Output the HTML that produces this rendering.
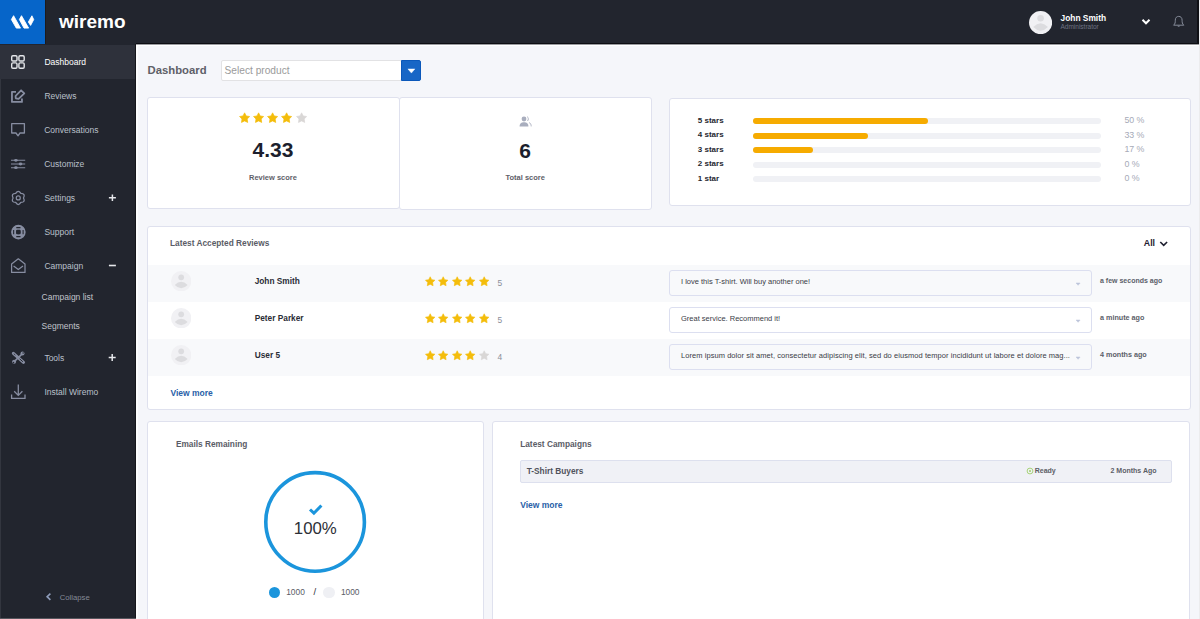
<!DOCTYPE html><html><head><meta charset="utf-8"><style>
*{margin:0;padding:0;box-sizing:border-box}
html,body{width:1200px;height:619px;overflow:hidden;background:#f5f6fa;font-family:"Liberation Sans",sans-serif}
.t{position:absolute;line-height:1;white-space:nowrap}
.a{position:absolute;display:block}
.box{position:absolute}
.card{position:absolute;background:#fff;border:1px solid #dfe1ee;border-radius:3px}
</style></head><body>
<div class="box" style="left:1199px;top:0;width:1px;height:619px;background:#ececee"></div>
<div class="box" style="left:0;top:0;width:1199px;height:44px;background:#22252e"></div>
<div class="box" style="left:136px;top:43px;width:1063px;height:1px;background:#0d0e13"></div>
<div class="box" style="left:1197px;top:0;width:2px;height:44px;background:#0f1015"></div>
<div class="box" style="left:136px;top:44px;width:1063px;height:1px;background:#9a9ba0"></div>
<div class="box" style="left:0;top:0;width:46px;height:46px;background:#0665c9;border-right:1px solid #1c1a1c;border-bottom:1px solid #1c1a1c"></div>
<svg class="a" style="left:0;top:0" width="45" height="45" viewBox="0 0 45 45"><path d="M13.6,15.7 L20.5,28.1 L16.3,28.1 L11.4,19.5 Z M21.5,15.7 L28.6,28.1 L24.0,28.1 L19.4,19.5 Z M31.9,15.8 L33.7,19.6 L30.6,25.4 L28.4,22.0 Z" fill="#fff" stroke="#fff" stroke-width="0.9" stroke-linejoin="round"/></svg>
<div class="t" style="left:59.00px;top:11.92px;font-size:19px;color:#ffffff;font-weight:bold;">wiremo</div>
<svg class="a" style="left:1029.10px;top:11.00px" width="23.2" height="23.2" viewBox="0 0 24 24"><circle cx="12" cy="12" r="12" fill="#f1f1f4"/><circle cx="12" cy="7.5" r="3.4" fill="#dcdcdf"/><path d="M4.4,16.5 Q12,8.8 19.6,16.5 Q12,24.2 4.4,16.5 Z" fill="#dcdcdf"/></svg>
<div class="t" style="left:1060.50px;top:13.79px;font-size:8.4px;color:#ffffff;font-weight:bold;">John Smith</div>
<div class="t" style="left:1060.50px;top:23.70px;font-size:6.5px;color:#6e7384;">Administrator</div>
<svg class="a" style="left:1140px;top:17px" width="12" height="10" viewBox="0 0 12 10"><path d="M2.5,2.8 L6,6.3 L9.5,2.8" fill="none" stroke="#fff" stroke-width="2"/></svg>
<svg class="a" style="left:1169px;top:12px" width="20" height="20" viewBox="1169 12 20 20"><path d="M1173.6,25.2 C1175.2,23.8 1175.3,22.4 1175.3,20.2 C1175.3,17.6 1176.8,16.4 1178.7,16.4 C1180.6,16.4 1182.1,17.6 1182.1,20.2 C1182.1,22.4 1182.2,23.8 1183.8,25.2 Z" fill="none" stroke="#8a909e" stroke-width="0.95" stroke-linejoin="round"/><path d="M1177.2,25.7 Q1178.7,27.8 1180.2,25.7 Z" fill="#8a909e"/></svg>
<div class="box" style="left:0;top:44px;width:136px;height:575px;background:#22252e"></div>
<div class="box" style="left:135px;top:44px;width:1px;height:575px;background:#15161b"></div>
<div class="box" style="left:0;top:618px;width:136px;height:1px;background:#56575e"></div>
<div class="box" style="left:0;top:46px;width:1px;height:572px;background:#33363f"></div>
<div class="box" style="left:0;top:44.5px;width:135px;height:34px;background:#2e313b"></div>
<svg class="a" style="left:10px;top:54px" width="16" height="16" viewBox="0 0 16 16"><g fill="none" stroke="#e4e6ea" stroke-width="1.4"><rect x="1.7" y="1.7" width="5.3" height="5.3" rx="1.2"/><rect x="8.9" y="1.7" width="5.3" height="5.3" rx="1.2"/><rect x="1.7" y="8.9" width="5.3" height="5.3" rx="1.2"/><rect x="8.9" y="8.9" width="5.3" height="5.3" rx="1.2"/></g></svg>
<svg class="a" style="left:8px;top:86px" width="20" height="20" viewBox="8 86 20 20"><g fill="none" stroke="#878da1" stroke-width="1.8" stroke-linejoin="round"><path d="M16,91.9 H11.95 V101.95 H21.95 V98.4"/><path d="M15.75,98.3 L15.6,96 L21.1,90.3 L24.3,93.3 L18.6,98.9 Z"/></g><path d="M21.3,92.6 L22.6,93.9" stroke="#22252e" stroke-width="0.6"/></svg>
<svg class="a" style="left:10px;top:122px" width="16" height="16" viewBox="0 0 16 16"><path d="M1.7,1.6 L14.4,1.6 L14.4,11 L10,11 L8,13.8 L6,11 L1.7,11 Z" fill="none" stroke="#878da1" stroke-width="1.3" stroke-linejoin="round"/></svg>
<svg class="a" style="left:10px;top:156px" width="16" height="16" viewBox="0 0 16 16"><g stroke="#878da1" stroke-width="1.1" fill="none"><path d="M1,4.3 H15.2 M1,8 H15.2 M1,11.7 H15.2"/></g><g fill="#878da1"><ellipse cx="5.9" cy="4.3" rx="1.8" ry="1.4"/><ellipse cx="10.5" cy="8" rx="1.8" ry="1.4"/><ellipse cx="5.9" cy="11.7" rx="1.8" ry="1.4"/></g></svg>
<svg class="a" style="left:8px;top:188px" width="20" height="20" viewBox="8 188 20 20"><g fill="none" stroke="#878da1" stroke-width="1.3" stroke-linejoin="round"><path d="M15.67,193.45 Q18.27,189.25 20.87,193.45 Q25.80,193.60 23.47,197.95 Q25.80,202.30 20.87,202.45 Q18.27,206.65 15.67,202.45 Q10.74,202.30 13.07,197.95 Q10.74,193.60 15.67,193.45 Z"/><circle cx="18.27" cy="197.95" r="2.0" stroke-width="1.2"/></g></svg>
<svg class="a" style="left:8px;top:222px" width="20" height="20" viewBox="8 222 20 20"><circle cx="18.38" cy="232.1" r="4.75" fill="none" stroke="#878da1" stroke-width="5.1"/><g stroke="#22252e" stroke-width="1.05"><path d="M16.3,227.6 H20.5 M16.3,236.6 H20.5 M13.65,230 V234.2 M23.1,230 V234.2"/></g><rect x="16.1" y="229.8" width="4.5" height="4.5" rx="1" fill="#22252e"/></svg>
<svg class="a" style="left:10px;top:256px" width="16" height="18" viewBox="0 0 16 18"><g fill="none" stroke="#878da1" stroke-width="1.25" stroke-linejoin="round"><path d="M1.6,8 L8.3,2.8 L15,8 L15,16.4 L1.6,16.4 Z"/><path d="M3.6,10 L8.3,13.6 L13,10"/></g></svg>
<svg class="a" style="left:8px;top:347px" width="20" height="20" viewBox="8 347 20 20"><g stroke-linecap="round" fill="none"><path d="M13.4,353.3 L23.5,362.3" stroke="#878da1" stroke-width="3.1"/><path d="M19.9,359.1 L22.6,361.5" stroke="#22252e" stroke-width="1.0"/><path d="M14.1,354 L15.1,354.9" stroke="#22252e" stroke-width="0.8"/><path d="M22.4,353.6 L14.2,361.6" stroke="#878da1" stroke-width="1.5"/></g><g fill="#878da1"><circle cx="22.5" cy="353.5" r="2.0"/><circle cx="14.1" cy="361.8" r="2.0"/></g><g fill="#22252e"><circle cx="23.1" cy="352.9" r="0.75"/><circle cx="13.5" cy="362.4" r="0.75"/></g></svg>
<svg class="a" style="left:10px;top:383px" width="16" height="17" viewBox="0 0 16 17"><g fill="none" stroke="#878da1" stroke-width="1.3"><path d="M8.3,1.6 V12.2 M4.2,8.3 L8.3,12.4 L12.4,8.3"/><path d="M1.6,11.4 V15.3 H15 V11.4"/></g></svg>
<div class="t" style="left:44.40px;top:57.70px;font-size:8.5px;color:#ffffff;">Dashboard</div>
<div class="t" style="left:44.40px;top:91.70px;font-size:8.5px;color:#bac0cb;">Reviews</div>
<div class="t" style="left:44.20px;top:125.70px;font-size:8.5px;color:#bac0cb;">Conversations</div>
<div class="t" style="left:44.20px;top:159.60px;font-size:8.5px;color:#bac0cb;">Customize</div>
<div class="t" style="left:44.40px;top:193.70px;font-size:8.5px;color:#bac0cb;">Settings</div>
<div class="t" style="left:44.40px;top:227.70px;font-size:8.5px;color:#bac0cb;">Support</div>
<div class="t" style="left:44.40px;top:262.10px;font-size:8.5px;color:#bac0cb;">Campaign</div>
<div class="t" style="left:41.60px;top:292.70px;font-size:8.5px;color:#c0c3cb;">Campaign list</div>
<div class="t" style="left:41.60px;top:321.60px;font-size:8.5px;color:#c0c3cb;">Segments</div>
<div class="t" style="left:44.40px;top:354.00px;font-size:8.5px;color:#bac0cb;">Tools</div>
<div class="t" style="left:44.40px;top:388.20px;font-size:8.5px;color:#bac0cb;">Install Wiremo</div>
<svg class="a" style="left:100px;top:188px" width="24" height="20" viewBox="100 188 24 20"><path d="M112.4,194.4 V201 M108.9,197.7 H115.9" stroke="#e6e7eb" stroke-width="1.5"/></svg>
<svg class="a" style="left:100px;top:256px" width="24" height="20" viewBox="100 256 24 20"><path d="M108.9,265.5 H115.9" stroke="#e6e7eb" stroke-width="1.6"/></svg>
<svg class="a" style="left:100px;top:348px" width="24" height="20" viewBox="100 348 24 20"><path d="M112.2,354.1 V360.9 M108.7,357.5 H115.7" stroke="#e6e7eb" stroke-width="1.5"/></svg>
<svg class="a" style="left:40px;top:586px" width="20" height="20" viewBox="40 586 20 20"><path d="M50.4,593.6 L47.1,596.7 L50.4,599.8" fill="none" stroke="#8e9cba" stroke-width="1.6"/></svg>
<div class="t" style="left:59.80px;top:593.78px;font-size:7.7px;color:#858a97;">Collapse</div>
<div class="box" style="left:136px;top:45px;width:2px;height:574px;background:#fdfdfe"></div>
<div class="box" style="left:136px;top:45px;width:1063px;height:1px;background:#ffffff"></div>
<div class="t" style="left:147.60px;top:64.93px;font-size:11.3px;color:#5e6068;font-weight:bold;">Dashboard</div>
<div class="box" style="left:221px;top:59.6px;width:181px;height:21.4px;background:#fff;border:1px solid #e2e2e4;border-radius:2px"></div>
<div class="t" style="left:224.50px;top:65.97px;font-size:10.2px;color:#9b9b9b;">Select product</div>
<div class="box" style="left:400.5px;top:59.8px;width:20.7px;height:20.8px;background:#1766c6;border:1px solid #0b58ba;border-radius:0 2px 2px 0"></div>
<svg class="a" style="left:405px;top:65px" width="12" height="12" viewBox="0 0 12 12"><path d="M2.9,3.9 L9.9,3.9 L6.4,8.1 Z" fill="#fff" stroke="#fff" stroke-width="0.4" stroke-linejoin="round"/></svg>
<div class="card" style="left:147px;top:97px;width:253px;height:112px"></div>
<div class="card" style="left:399px;top:97px;width:253px;height:113px"></div>
<div class="card" style="left:668.5px;top:97.5px;width:522px;height:108px"></div>
<svg class="a" style="left:238.50px;top:112.00px" width="11.2" height="11.2" viewBox="0 0 10 10"><path d="M5.00,0.75 L6.44,3.52 L9.52,4.03 L7.33,6.26 L7.79,9.34 L5.00,7.95 L2.21,9.34 L2.67,6.26 L0.48,4.03 L3.56,3.52 Z" fill="#f4bd0b" stroke="#f4bd0b" stroke-width="0.6" stroke-linejoin="round"/></svg><svg class="a" style="left:252.75px;top:112.00px" width="11.2" height="11.2" viewBox="0 0 10 10"><path d="M5.00,0.75 L6.44,3.52 L9.52,4.03 L7.33,6.26 L7.79,9.34 L5.00,7.95 L2.21,9.34 L2.67,6.26 L0.48,4.03 L3.56,3.52 Z" fill="#f4bd0b" stroke="#f4bd0b" stroke-width="0.6" stroke-linejoin="round"/></svg><svg class="a" style="left:267.00px;top:112.00px" width="11.2" height="11.2" viewBox="0 0 10 10"><path d="M5.00,0.75 L6.44,3.52 L9.52,4.03 L7.33,6.26 L7.79,9.34 L5.00,7.95 L2.21,9.34 L2.67,6.26 L0.48,4.03 L3.56,3.52 Z" fill="#f4bd0b" stroke="#f4bd0b" stroke-width="0.6" stroke-linejoin="round"/></svg><svg class="a" style="left:281.25px;top:112.00px" width="11.2" height="11.2" viewBox="0 0 10 10"><path d="M5.00,0.75 L6.44,3.52 L9.52,4.03 L7.33,6.26 L7.79,9.34 L5.00,7.95 L2.21,9.34 L2.67,6.26 L0.48,4.03 L3.56,3.52 Z" fill="#f4bd0b" stroke="#f4bd0b" stroke-width="0.6" stroke-linejoin="round"/></svg><svg class="a" style="left:295.50px;top:112.00px" width="11.2" height="11.2" viewBox="0 0 10 10"><path d="M5.00,0.75 L6.44,3.52 L9.52,4.03 L7.33,6.26 L7.79,9.34 L5.00,7.95 L2.21,9.34 L2.67,6.26 L0.48,4.03 L3.56,3.52 Z" fill="#d9d7d6" stroke="#d9d7d6" stroke-width="0.6" stroke-linejoin="round"/></svg>
<div class="t" style="left:-27.00px;width:600px;text-align:center;top:139.42px;font-size:21px;color:#1c1f2d;font-weight:bold;">4.33</div>
<div class="t" style="left:-27.00px;width:600px;text-align:center;top:173.95px;font-size:7.5px;color:#5e6068;font-weight:bold;">Review score</div>
<svg class="a" style="left:519px;top:116px" width="13" height="11" viewBox="0 0 13 11"><g fill="#a9aebe"><circle cx="5" cy="3" r="2.4"/><path d="M0.6,10.4 C0.6,7.2 2.4,6.2 5,6.2 C7.6,6.2 9.4,7.2 9.4,10.4 Z"/></g><g fill="none" stroke="#a9aebe" stroke-width="0.9"><path d="M8.2,0.7 C9.6,1.2 9.8,4.2 8.4,5"/><path d="M10.2,6.6 C11.6,7.2 12.2,8.6 12.2,10.4"/></g></svg>
<div class="t" style="left:225.20px;width:600px;text-align:center;top:140.02px;font-size:21px;color:#1c1f2d;font-weight:bold;">6</div>
<div class="t" style="left:225.20px;width:600px;text-align:center;top:174.45px;font-size:7.5px;color:#5e6068;font-weight:bold;">Total score</div>
<div class="t" style="left:697.80px;top:116.83px;font-size:8px;color:#25272f;font-weight:bold;">5 stars</div>
<div class="box" style="left:753.3px;top:118.00px;width:348px;height:6px;border-radius:3px;background:#f0f1f5"></div>
<div class="box" style="left:753.3px;top:118.00px;width:174.5px;height:6px;border-radius:3px;background:#f6ab00"></div>
<div class="t" style="left:1124.40px;top:116.15px;font-size:8.8px;color:#a6aab7;">50 %</div>
<div class="t" style="left:697.80px;top:131.38px;font-size:8px;color:#25272f;font-weight:bold;">4 stars</div>
<div class="box" style="left:753.3px;top:132.55px;width:348px;height:6px;border-radius:3px;background:#f0f1f5"></div>
<div class="box" style="left:753.3px;top:132.55px;width:115px;height:6px;border-radius:3px;background:#f6ab00"></div>
<div class="t" style="left:1124.40px;top:130.70px;font-size:8.8px;color:#a6aab7;">33 %</div>
<div class="t" style="left:697.80px;top:145.93px;font-size:8px;color:#25272f;font-weight:bold;">3 stars</div>
<div class="box" style="left:753.3px;top:147.10px;width:348px;height:6px;border-radius:3px;background:#f0f1f5"></div>
<div class="box" style="left:753.3px;top:147.10px;width:59.5px;height:6px;border-radius:3px;background:#f6ab00"></div>
<div class="t" style="left:1124.40px;top:145.25px;font-size:8.8px;color:#a6aab7;">17 %</div>
<div class="t" style="left:697.80px;top:160.48px;font-size:8px;color:#25272f;font-weight:bold;">2 stars</div>
<div class="box" style="left:753.3px;top:161.65px;width:348px;height:6px;border-radius:3px;background:#f0f1f5"></div>
<div class="t" style="left:1124.40px;top:159.80px;font-size:8.8px;color:#a6aab7;">0 %</div>
<div class="t" style="left:697.80px;top:175.03px;font-size:8px;color:#25272f;font-weight:bold;">1 star</div>
<div class="box" style="left:753.3px;top:176.20px;width:348px;height:6px;border-radius:3px;background:#f0f1f5"></div>
<div class="t" style="left:1124.40px;top:174.35px;font-size:8.8px;color:#a6aab7;">0 %</div>
<div class="card" style="left:147px;top:226px;width:1044px;height:184px"></div>
<div class="t" style="left:170.00px;top:238.87px;font-size:8.3px;color:#5a5c66;font-weight:bold;">Latest Accepted Reviews</div>
<div class="t" style="left:1143.80px;top:238.95px;font-size:8.8px;color:#1e2030;font-weight:bold;">All</div>
<svg class="a" style="left:1158px;top:239px" width="12" height="9" viewBox="0 0 12 9"><path d="M2.3,3 L5.7,6.3 L9.1,3" fill="none" stroke="#1e2030" stroke-width="1.6"/></svg>
<div class="box" style="left:148px;top:265px;width:1042px;height:37px;background:#f8f9fb"></div>
<svg class="a" style="left:170.80px;top:270.80px" width="20.4" height="20.4" viewBox="0 0 24 24"><circle cx="12" cy="12" r="12" fill="#f1f1f4"/><circle cx="12" cy="7.5" r="3.4" fill="#dcdcdf"/><path d="M4.4,16.5 Q12,8.8 19.6,16.5 Q12,24.2 4.4,16.5 Z" fill="#dcdcdf"/></svg>
<div class="t" style="left:254.70px;top:276.97px;font-size:8.3px;color:#2a2c36;font-weight:bold;">John Smith</div>
<svg class="a" style="left:424.60px;top:276.20px" width="10.4" height="10.4" viewBox="0 0 10 10"><path d="M5.00,0.75 L6.44,3.52 L9.52,4.03 L7.33,6.26 L7.79,9.34 L5.00,7.95 L2.21,9.34 L2.67,6.26 L0.48,4.03 L3.56,3.52 Z" fill="#f4bd0b" stroke="#f4bd0b" stroke-width="0.6" stroke-linejoin="round"/></svg><svg class="a" style="left:438.17px;top:276.20px" width="10.4" height="10.4" viewBox="0 0 10 10"><path d="M5.00,0.75 L6.44,3.52 L9.52,4.03 L7.33,6.26 L7.79,9.34 L5.00,7.95 L2.21,9.34 L2.67,6.26 L0.48,4.03 L3.56,3.52 Z" fill="#f4bd0b" stroke="#f4bd0b" stroke-width="0.6" stroke-linejoin="round"/></svg><svg class="a" style="left:451.74px;top:276.20px" width="10.4" height="10.4" viewBox="0 0 10 10"><path d="M5.00,0.75 L6.44,3.52 L9.52,4.03 L7.33,6.26 L7.79,9.34 L5.00,7.95 L2.21,9.34 L2.67,6.26 L0.48,4.03 L3.56,3.52 Z" fill="#f4bd0b" stroke="#f4bd0b" stroke-width="0.6" stroke-linejoin="round"/></svg><svg class="a" style="left:465.31px;top:276.20px" width="10.4" height="10.4" viewBox="0 0 10 10"><path d="M5.00,0.75 L6.44,3.52 L9.52,4.03 L7.33,6.26 L7.79,9.34 L5.00,7.95 L2.21,9.34 L2.67,6.26 L0.48,4.03 L3.56,3.52 Z" fill="#f4bd0b" stroke="#f4bd0b" stroke-width="0.6" stroke-linejoin="round"/></svg><svg class="a" style="left:478.88px;top:276.20px" width="10.4" height="10.4" viewBox="0 0 10 10"><path d="M5.00,0.75 L6.44,3.52 L9.52,4.03 L7.33,6.26 L7.79,9.34 L5.00,7.95 L2.21,9.34 L2.67,6.26 L0.48,4.03 L3.56,3.52 Z" fill="#f4bd0b" stroke="#f4bd0b" stroke-width="0.6" stroke-linejoin="round"/></svg>
<div class="t" style="left:497.40px;top:279.29px;font-size:8.4px;color:#8a8e99;">5</div>
<div class="box" style="left:669px;top:270px;width:423px;height:26px;border:1px solid #dcdff0;border-radius:3px;"></div>
<div class="t" style="left:681.00px;top:277.65px;font-size:7.5px;color:#3a3c47;">I love this T-shirt. Will buy another one!</div>
<svg class="a" style="left:1075px;top:282px" width="6" height="4" viewBox="0 0 6 4"><path d="M1.1,1 L5.1,1 L3.1,3.3 Z" fill="#bcc4da" stroke="#bcc4da" stroke-width="0.5" stroke-linejoin="round"/></svg>
<div class="t" style="left:1100.00px;top:276.97px;font-size:7.0px;color:#5b5e69;font-weight:bold;">a few seconds ago</div>
<svg class="a" style="left:170.80px;top:307.80px" width="20.4" height="20.4" viewBox="0 0 24 24"><circle cx="12" cy="12" r="12" fill="#f1f1f4"/><circle cx="12" cy="7.5" r="3.4" fill="#dcdcdf"/><path d="M4.4,16.5 Q12,8.8 19.6,16.5 Q12,24.2 4.4,16.5 Z" fill="#dcdcdf"/></svg>
<div class="t" style="left:254.70px;top:313.97px;font-size:8.3px;color:#2a2c36;font-weight:bold;">Peter Parker</div>
<svg class="a" style="left:424.60px;top:313.20px" width="10.4" height="10.4" viewBox="0 0 10 10"><path d="M5.00,0.75 L6.44,3.52 L9.52,4.03 L7.33,6.26 L7.79,9.34 L5.00,7.95 L2.21,9.34 L2.67,6.26 L0.48,4.03 L3.56,3.52 Z" fill="#f4bd0b" stroke="#f4bd0b" stroke-width="0.6" stroke-linejoin="round"/></svg><svg class="a" style="left:438.17px;top:313.20px" width="10.4" height="10.4" viewBox="0 0 10 10"><path d="M5.00,0.75 L6.44,3.52 L9.52,4.03 L7.33,6.26 L7.79,9.34 L5.00,7.95 L2.21,9.34 L2.67,6.26 L0.48,4.03 L3.56,3.52 Z" fill="#f4bd0b" stroke="#f4bd0b" stroke-width="0.6" stroke-linejoin="round"/></svg><svg class="a" style="left:451.74px;top:313.20px" width="10.4" height="10.4" viewBox="0 0 10 10"><path d="M5.00,0.75 L6.44,3.52 L9.52,4.03 L7.33,6.26 L7.79,9.34 L5.00,7.95 L2.21,9.34 L2.67,6.26 L0.48,4.03 L3.56,3.52 Z" fill="#f4bd0b" stroke="#f4bd0b" stroke-width="0.6" stroke-linejoin="round"/></svg><svg class="a" style="left:465.31px;top:313.20px" width="10.4" height="10.4" viewBox="0 0 10 10"><path d="M5.00,0.75 L6.44,3.52 L9.52,4.03 L7.33,6.26 L7.79,9.34 L5.00,7.95 L2.21,9.34 L2.67,6.26 L0.48,4.03 L3.56,3.52 Z" fill="#f4bd0b" stroke="#f4bd0b" stroke-width="0.6" stroke-linejoin="round"/></svg><svg class="a" style="left:478.88px;top:313.20px" width="10.4" height="10.4" viewBox="0 0 10 10"><path d="M5.00,0.75 L6.44,3.52 L9.52,4.03 L7.33,6.26 L7.79,9.34 L5.00,7.95 L2.21,9.34 L2.67,6.26 L0.48,4.03 L3.56,3.52 Z" fill="#f4bd0b" stroke="#f4bd0b" stroke-width="0.6" stroke-linejoin="round"/></svg>
<div class="t" style="left:497.40px;top:316.29px;font-size:8.4px;color:#8a8e99;">5</div>
<div class="box" style="left:669px;top:307px;width:423px;height:26px;border:1px solid #dcdff0;border-radius:3px;background:#fff;"></div>
<div class="t" style="left:681.00px;top:314.65px;font-size:7.5px;color:#3a3c47;">Great service. Recommend it!</div>
<svg class="a" style="left:1075px;top:319px" width="6" height="4" viewBox="0 0 6 4"><path d="M1.1,1 L5.1,1 L3.1,3.3 Z" fill="#bcc4da" stroke="#bcc4da" stroke-width="0.5" stroke-linejoin="round"/></svg>
<div class="t" style="left:1100.00px;top:313.81px;font-size:7.2px;color:#5b5e69;font-weight:bold;">a minute ago</div>
<div class="box" style="left:148px;top:339px;width:1042px;height:37px;background:#f8f9fb"></div>
<svg class="a" style="left:170.80px;top:344.80px" width="20.4" height="20.4" viewBox="0 0 24 24"><circle cx="12" cy="12" r="12" fill="#f1f1f4"/><circle cx="12" cy="7.5" r="3.4" fill="#dcdcdf"/><path d="M4.4,16.5 Q12,8.8 19.6,16.5 Q12,24.2 4.4,16.5 Z" fill="#dcdcdf"/></svg>
<div class="t" style="left:254.70px;top:350.97px;font-size:8.3px;color:#2a2c36;font-weight:bold;">User 5</div>
<svg class="a" style="left:424.60px;top:350.20px" width="10.4" height="10.4" viewBox="0 0 10 10"><path d="M5.00,0.75 L6.44,3.52 L9.52,4.03 L7.33,6.26 L7.79,9.34 L5.00,7.95 L2.21,9.34 L2.67,6.26 L0.48,4.03 L3.56,3.52 Z" fill="#f4bd0b" stroke="#f4bd0b" stroke-width="0.6" stroke-linejoin="round"/></svg><svg class="a" style="left:438.17px;top:350.20px" width="10.4" height="10.4" viewBox="0 0 10 10"><path d="M5.00,0.75 L6.44,3.52 L9.52,4.03 L7.33,6.26 L7.79,9.34 L5.00,7.95 L2.21,9.34 L2.67,6.26 L0.48,4.03 L3.56,3.52 Z" fill="#f4bd0b" stroke="#f4bd0b" stroke-width="0.6" stroke-linejoin="round"/></svg><svg class="a" style="left:451.74px;top:350.20px" width="10.4" height="10.4" viewBox="0 0 10 10"><path d="M5.00,0.75 L6.44,3.52 L9.52,4.03 L7.33,6.26 L7.79,9.34 L5.00,7.95 L2.21,9.34 L2.67,6.26 L0.48,4.03 L3.56,3.52 Z" fill="#f4bd0b" stroke="#f4bd0b" stroke-width="0.6" stroke-linejoin="round"/></svg><svg class="a" style="left:465.31px;top:350.20px" width="10.4" height="10.4" viewBox="0 0 10 10"><path d="M5.00,0.75 L6.44,3.52 L9.52,4.03 L7.33,6.26 L7.79,9.34 L5.00,7.95 L2.21,9.34 L2.67,6.26 L0.48,4.03 L3.56,3.52 Z" fill="#f4bd0b" stroke="#f4bd0b" stroke-width="0.6" stroke-linejoin="round"/></svg><svg class="a" style="left:478.88px;top:350.20px" width="10.4" height="10.4" viewBox="0 0 10 10"><path d="M5.00,0.75 L6.44,3.52 L9.52,4.03 L7.33,6.26 L7.79,9.34 L5.00,7.95 L2.21,9.34 L2.67,6.26 L0.48,4.03 L3.56,3.52 Z" fill="#d9d7d6" stroke="#d9d7d6" stroke-width="0.6" stroke-linejoin="round"/></svg>
<div class="t" style="left:497.40px;top:353.29px;font-size:8.4px;color:#8a8e99;">4</div>
<div class="box" style="left:669px;top:344px;width:423px;height:26px;border:1px solid #dcdff0;border-radius:3px;"></div>
<div class="t" style="left:681.00px;top:351.65px;font-size:7.5px;color:#3a3c47;letter-spacing:0.058px;">Lorem ipsum dolor sit amet, consectetur adipiscing elit, sed do eiusmod tempor incididunt ut labore et dolore mag...</div>
<svg class="a" style="left:1075px;top:356px" width="6" height="4" viewBox="0 0 6 4"><path d="M1.1,1 L5.1,1 L3.1,3.3 Z" fill="#bcc4da" stroke="#bcc4da" stroke-width="0.5" stroke-linejoin="round"/></svg>
<div class="t" style="left:1100.00px;top:350.81px;font-size:7.2px;color:#5b5e69;font-weight:bold;">4 months ago</div>
<div class="t" style="left:170.40px;top:388.50px;font-size:8.5px;color:#2a5fa8;font-weight:bold;">View more</div>
<div class="card" style="left:147px;top:421px;width:337px;height:210px"></div>
<div class="t" style="left:175.90px;top:439.87px;font-size:8.3px;color:#5a5c66;font-weight:bold;">Emails Remaining</div>
<svg class="a" style="left:263px;top:470px" width="104" height="104" viewBox="0 0 104 104"><circle cx="52.1" cy="51.9" r="49.3" fill="none" stroke="#1b95dc" stroke-width="3.6"/><path d="M47.0,39.5 L50.9,43.2 L58.4,35.5" fill="none" stroke="#1b95dc" stroke-width="3"/></svg>
<div class="t" style="left:15.30px;width:600px;text-align:center;top:521.18px;font-size:16.8px;color:#2d2f36;">100%</div>
<div class="box" style="left:269.2px;top:586.8px;width:11px;height:11px;border-radius:50%;background:#1b95dc"></div>
<div class="t" style="left:286.20px;top:587.79px;font-size:8.4px;color:#5a5c66;">1000</div>
<div class="t" style="left:313.60px;top:587.36px;font-size:9.5px;color:#2d2f36;">/</div>
<div class="box" style="left:323.2px;top:586.8px;width:11.5px;height:11.5px;border-radius:50%;background:#eff0f4"></div>
<div class="t" style="left:340.90px;top:587.79px;font-size:8.4px;color:#5a5c66;">1000</div>
<div class="card" style="left:491.5px;top:421px;width:698.5px;height:210px"></div>
<div class="t" style="left:520.20px;top:439.67px;font-size:8.3px;color:#5a5c66;font-weight:bold;">Latest Campaigns</div>
<div class="box" style="left:520px;top:460px;width:652px;height:22.7px;background:#f0f1f6;border:1px solid #dde0ee;border-radius:2px"></div>
<div class="t" style="left:526.70px;top:467.37px;font-size:8.3px;color:#50535c;font-weight:bold;">T-Shirt Buyers</div>
<svg class="a" style="left:1026px;top:466.5px" width="8" height="8" viewBox="0 0 8 8"><circle cx="4" cy="4" r="2.9" fill="none" stroke="#9fcf6a" stroke-width="0.9"/><circle cx="4" cy="4" r="1" fill="#9fcf6a"/></svg>
<div class="t" style="left:1034.70px;top:467.27px;font-size:7px;color:#5c5e66;font-weight:bold;">Ready</div>
<div class="t" style="left:1110.50px;top:467.27px;font-size:7px;color:#5c5e66;font-weight:bold;">2 Months Ago</div>
<div class="t" style="left:520.20px;top:501.30px;font-size:8.5px;color:#2a5fa8;font-weight:bold;">View more</div>
</body></html>
